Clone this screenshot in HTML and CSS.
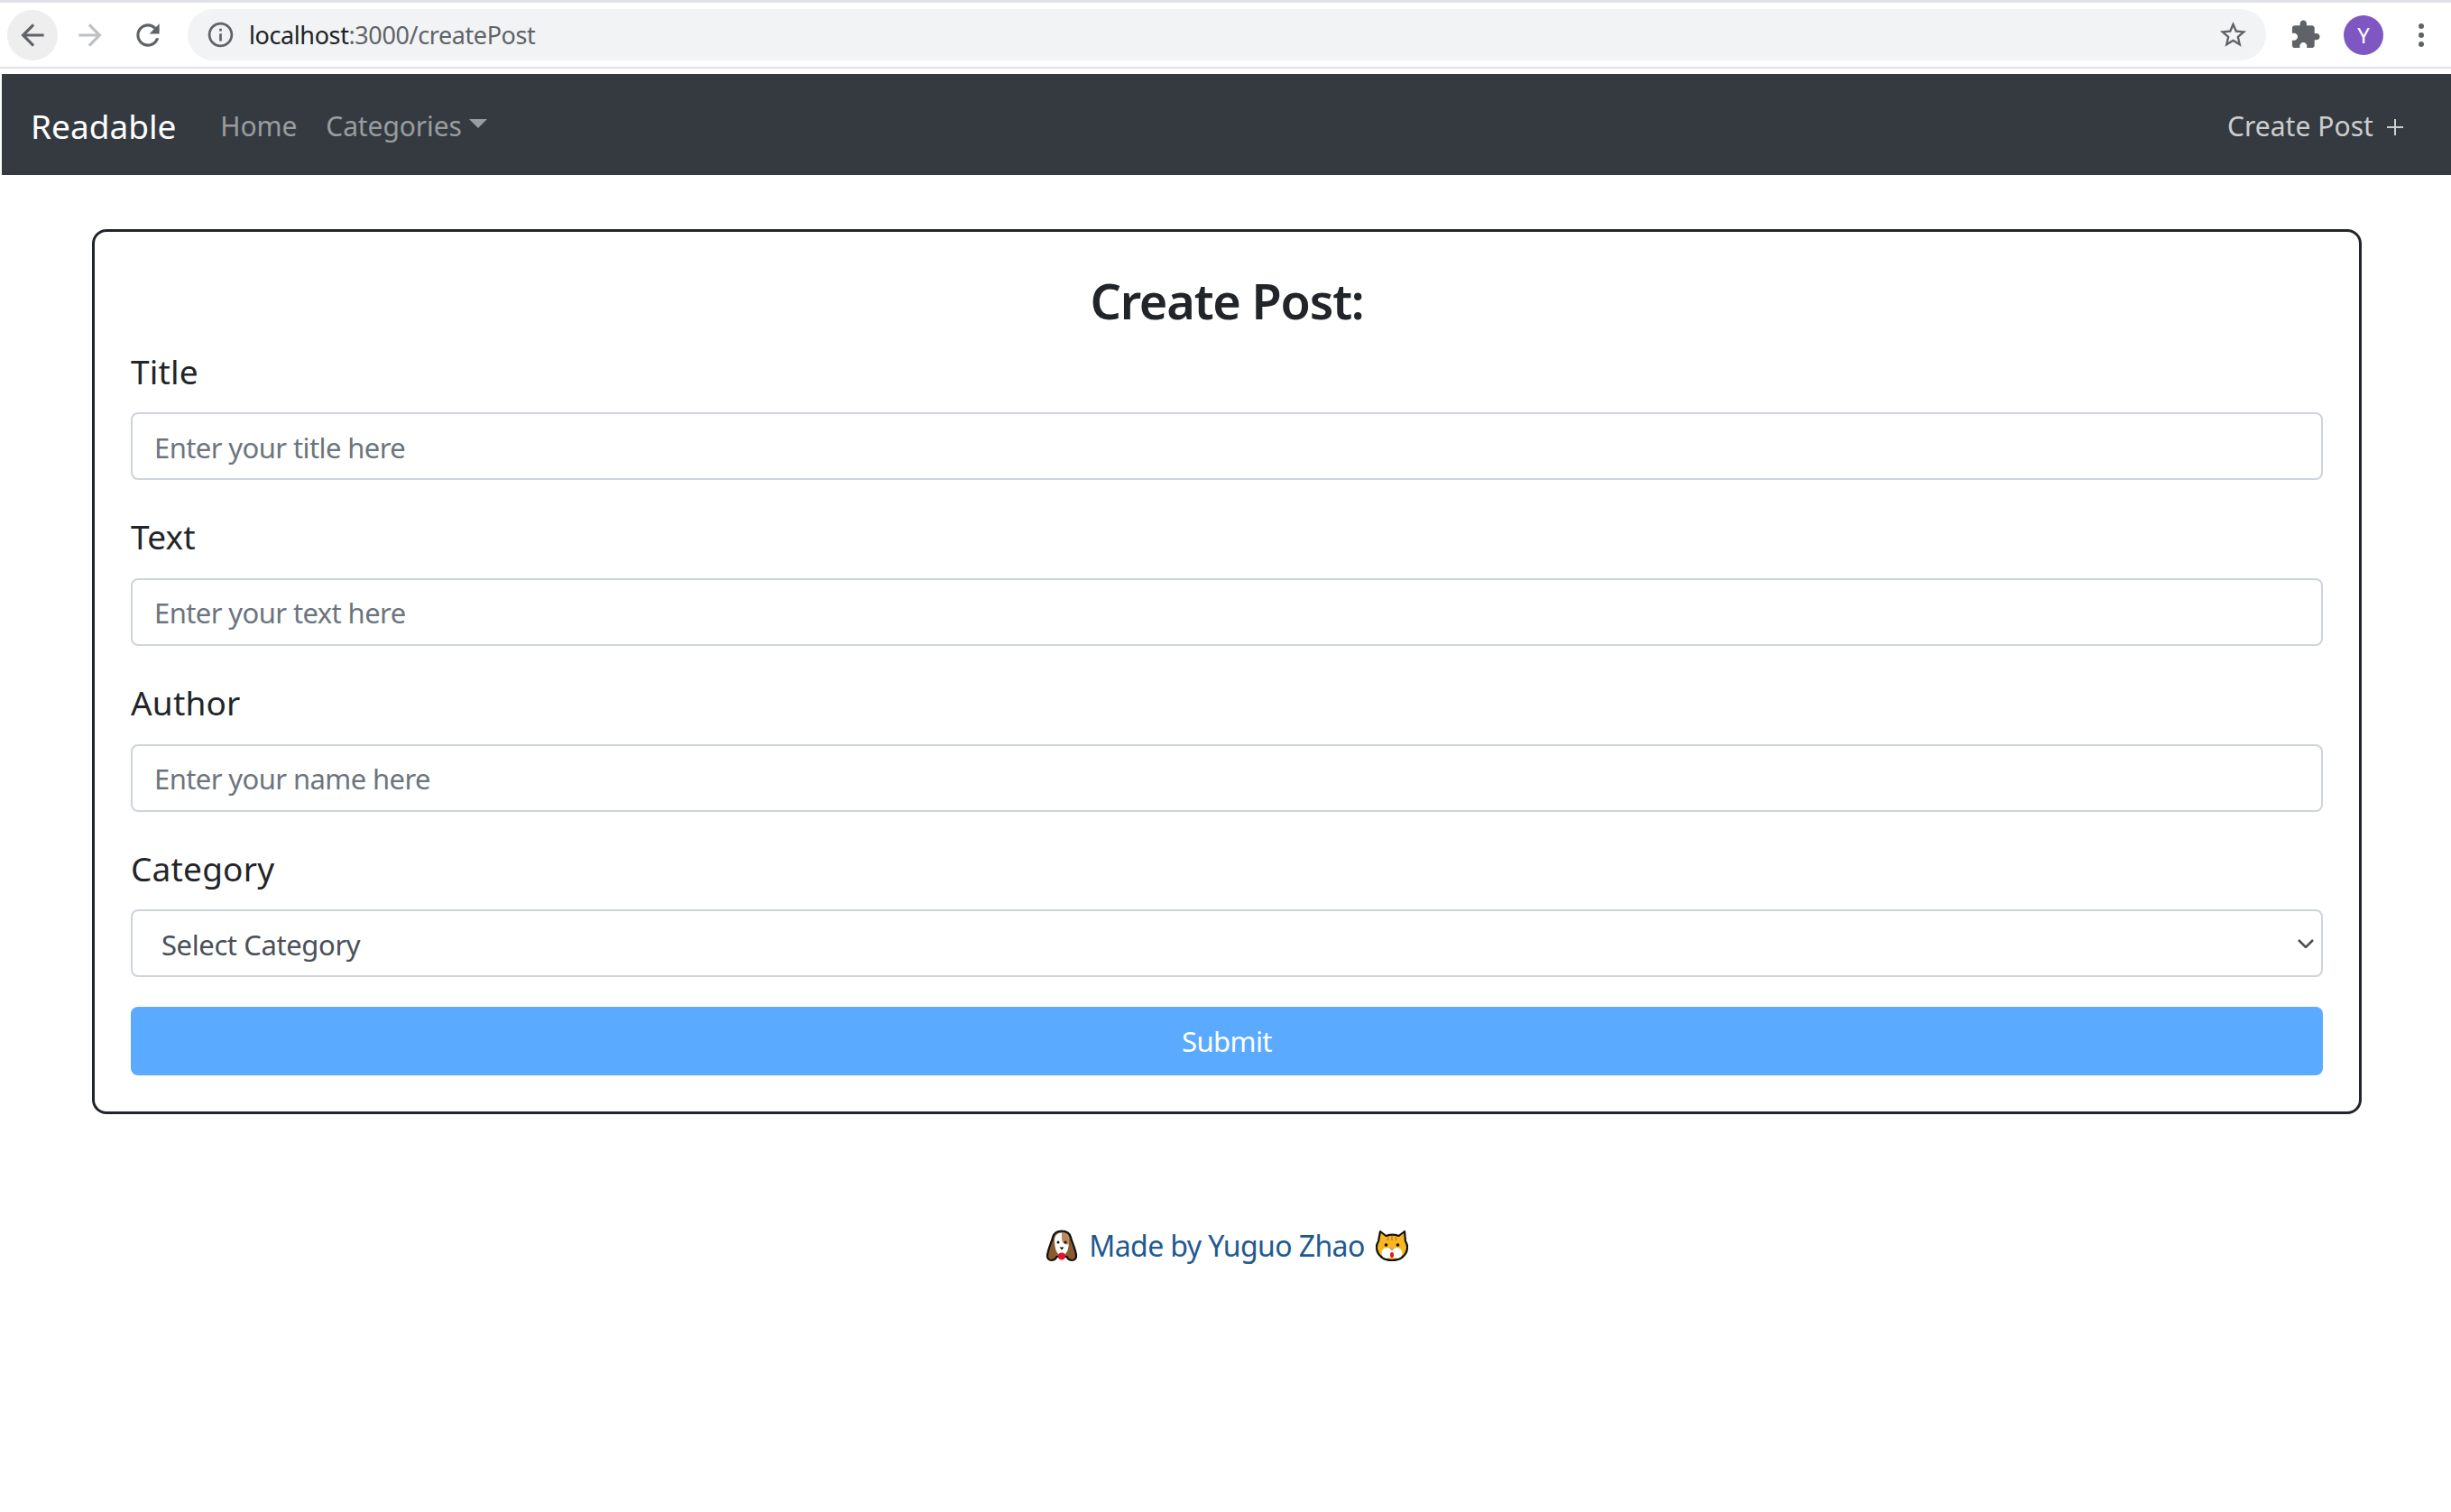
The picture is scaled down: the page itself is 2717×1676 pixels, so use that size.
FILE: index.html
```html
<!DOCTYPE html>
<html lang="en">
<head>
<meta charset="utf-8">
<title>Readable</title>
<link rel="stylesheet" href="styles.css">
</head>
<body>
<div class="chrome">
  <div class="circle-btn hover"><svg class="ic" viewBox="0 0 24 24"><path d="M20 11H7.83l5.59-5.59L12 4l-8 8 8 8 1.41-1.41L7.83 13H20v-2z"/></svg></div>
  <div class="circle-btn fwd"><svg class="ic faded" viewBox="0 0 24 24"><path d="M4 11h12.170l-5.590-5.590L12 4l8 8-8 8-1.410-1.410L16.170 13H4v-2z"/></svg></div>
  <div class="circle-btn reload"><svg class="ic" viewBox="0 0 24 24"><path d="M17.65 6.35C16.2 4.9 14.21 4 12 4c-4.42 0-7.99 3.58-7.99 8s3.57 8 7.99 8c3.73 0 6.84-2.55 7.73-6h-2.08c-.82 2.33-3.04 4-5.65 4-3.31 0-6-2.69-6-6s2.69-6 6-6c1.66 0 3.14.69 4.22 1.78L13 11h7V4l-2.35 2.35z"/></svg></div>
  <div class="omnibox">
    <svg class="ic info" viewBox="0 0 24 24"><path d="M11 7h2v2h-2zm0 4h2v6h-2zm1-9C6.48 2 2 6.48 2 12s4.48 10 10 10 10-4.48 10-10S17.52 2 12 2zm0 18c-4.41 0-8-3.59-8-8s3.59-8 8-8 8 3.59 8 8-3.59 8-8 8z"/></svg>
    <span class="url"><span class="host">localhost</span>:3000/createPost</span>
    <svg class="ic star" viewBox="0 0 24 24"><path d="M22 9.24l-7.19-.62L12 2 9.19 8.63 2 9.24l5.46 4.73L5.82 21 12 17.27 18.18 21l-1.63-7.03L22 9.24zM12 15.4l-3.76 2.27 1-4.28-3.32-2.88 4.38-.38L12 6.1l1.71 4.04 4.38.38-3.32 2.88 1 4.28L12 15.4z"/></svg>
  </div>
  <svg class="ic puzzle" viewBox="0 0 24 24"><path d="M20.5 11H19V7c0-1.1-.9-2-2-2h-4V3.5C13 2.12 11.88 1 10.5 1S8 2.12 8 3.5V5H4c-1.1 0-1.99.9-1.99 2v3.8H3.5c1.49 0 2.7 1.21 2.7 2.7s-1.21 2.7-2.7 2.7H2V20c0 1.1.9 2 2 2h3.8v-1.5c0-1.49 1.21-2.7 2.7-2.7 1.49 0 2.7 1.21 2.7 2.7V22H17c1.1 0 2-.9 2-2v-4h1.5c1.38 0 2.5-1.12 2.5-2.5S21.88 11 20.5 11z"/></svg>
  <div class="avatar">Y</div>
  <div class="dots"><i></i><i></i><i></i></div>
</div>

<nav class="navbar">
  <a class="brand">Readable</a>
  <a class="nav-link home">Home</a>
  <a class="nav-link cats">Categories<span class="caret"></span></a>
  <a class="create">Create Post<svg class="plus" viewBox="0 0 20 20"><path d="M10 1v18M1 10h18"/></svg></a>
</nav>

<main class="page">
  <form class="card">
    <h2 class="heading">Create Post:</h2>
    <div class="group">
      <label class="label" for="t">Title</label>
      <input class="field" id="t" placeholder="Enter your title here">
    </div>
    <div class="group">
      <label class="label" for="x">Text</label>
      <input class="field" id="x" placeholder="Enter your text here">
    </div>
    <div class="group">
      <label class="label" for="a">Author</label>
      <input class="field" id="a" placeholder="Enter your name here">
    </div>
    <div class="group">
      <label class="label" for="c">Category</label>
      <div class="select-wrap">
        <select class="field select" id="c"><option>Select Category</option></select>
        <svg class="chevron" viewBox="0 0 18 10"><path d="M1 1l8 8 8-8"/></svg>
      </div>
    </div>
    <button class="submit" type="button">Submit</button>
  </form>

  <footer class="footer">
    <svg class="emoji" viewBox="0 0 36 36">
      <path d="M18 1.500c-6 0-9 3-10 7-1 5-5 12-6 20-.4 3 1.500 5.500 4.500 5.500 3 0 5-2 6-4h11c1 2 3 4 6 4s4.900-2.500 4.500-5.500c-1-8-5-15-6-20-1-4-4-7-10-7z" fill="#8a5a2e" stroke="#111" stroke-width="2.200"/>
      <path d="M18 3.500c-5 0-8 3-8 8 0 6 1 17 8 17s8-11 8-17c0-5-3-8-8-8z" fill="#fff"/>
      <path d="M18 3.500c4.500 0 8 3 8 8 0 2-.1 3-.4 5-4 .5-7.600-2-7.600-6z" fill="#b98a5e"/>
      <circle cx="14" cy="14" r="1.500" fill="#111"/><circle cx="22" cy="14" r="1.500" fill="#111"/>
      <path d="M15.500 19.500h5L18 22.500z" fill="#111"/>
      <circle cx="18" cy="29.500" r="4" fill="#e8112d"/>
    </svg>
    <a class="credit">Made by Yuguo Zhao</a>
    <svg class="emoji" viewBox="0 0 36 36">
      <path d="M5 2l6.500 5c4-1.500 10-1.500 14 0L32 2l1 11c2 3 2.500 5 2 8-1 8-8 13-17 13S2 29 1 21c-.5-3 0-5 2-8z" fill="#f8b71c" stroke="#111" stroke-width="2.200" stroke-linejoin="round"/>
      <path d="M18 7v5M13.500 8v4M22.500 8v4" stroke="#d9821e" stroke-width="1.800"/>
      <circle cx="11.500" cy="17" r="1.800" fill="#111"/><circle cx="24.500" cy="17" r="1.800" fill="#111"/>
      <ellipse cx="12.500" cy="26" rx="6" ry="6" fill="#fff"/><ellipse cx="23.500" cy="26" rx="6" ry="6" fill="#fff"/>
      <path d="M15 20h6l-3 3z" fill="#ec8f5c"/>
      <ellipse cx="18" cy="28" rx="2" ry="3" fill="#e8112d"/>
    </svg>
  </footer>
</main>
</body>
</html>
```
FILE: styles.css
```css
* { box-sizing: border-box; }
html, body { margin: 0; background: #fff; }
body { font-family: "Noto Sans", "Open Sans", sans-serif; color: #212529; }

.chrome {
  height: 76px;
  border-top: 3px solid #dee1e6;
  border-bottom: 2px solid #dee1e6;
  display: flex;
  align-items: center;
  padding: 0 0 0 8px;
}
.circle-btn { width: 56px; height: 56px; border-radius: 50%; display: flex; align-items: center; justify-content: center; flex: none; }
.circle-btn.hover { background: #eeeeee; }
.circle-btn.fwd { margin-left: 8px; }
.circle-btn.reload { margin-left: 8px; }
.ic { width: 38px; height: 38px; fill: #5f6368; flex: none; display: block; }
.ic.faded { fill: #bdc0c4; }
.omnibox {
  margin-left: 16px;
  width: 2304px;
  height: 57px;
  border-radius: 29px;
  background: #f1f3f4;
  display: flex;
  align-items: center;
  padding: 0 19px 0 20px;
}
.info { width: 33px; height: 33px; }
.url { margin-left: 15px; font-size: 27px; letter-spacing: -0.4px; color: #5f6368; flex: 1; }
.host { color: #202124; }
.star { width: 35px; height: 35px; }
.puzzle { width: 35px; height: 35px; margin-left: 26px; }
.avatar {
  width: 44px; height: 44px; border-radius: 50%; background: #7e57c2; color: #fff;
  font-size: 24px; display: flex; align-items: center; justify-content: center; margin-left: 25px; flex: none;
}
.dots { display: flex; flex-direction: column; gap: 4px; margin-left: 39px; flex: none; }
.dots i { width: 6px; height: 6px; border-radius: 50%; background: #5f6368; display: block; }

.navbar {
  margin-top: 6px;
  margin-left: 2px;
  height: 112px;
  background: #343a40;
  display: flex;
  align-items: center;
  padding: 2px 52px 0 32px;
  font-size: 30px;
}
.brand { color: #fff; font-size: 37px; letter-spacing: 0; }
.nav-link { color: rgba(255,255,255,.5); letter-spacing: -0.1px; }
.home { margin-left: 49px; }
.cats { margin-left: 32px; display: flex; align-items: center; }
.caret {
  margin-left: 8px; margin-top: -4px; width: 0; height: 0;
  border-left: 10px solid transparent; border-right: 10px solid transparent; border-top: 10px solid rgba(255,255,255,.5);
}
.create { margin-left: auto; color: rgba(255,255,255,.75); letter-spacing: 0.05px; display: flex; align-items: center; }
.plus { width: 20px; height: 20px; margin-left: 14px; margin-top: 4px; stroke: rgba(255,255,255,.75); stroke-width: 2; fill: none; }

.page { padding: 60px 0 0 102px; }
.card {
  width: 2516px;
  height: 981px;
  border: 3px solid #212529;
  border-radius: 16px;
  padding: 40px 40px;
  display: flex;
  flex-direction: column;
}
.heading { margin: 0; text-align: center; font-size: 54px; font-weight: 600; letter-spacing: -1.2px; line-height: 72px; height: 68px; }
.group { height: 184px; display: flex; flex-direction: column; }
.label { font-size: 37px; letter-spacing: 0.2px; line-height: 50px; height: 92px; padding-top: 1px; display: flex; align-items: center; }
.field {
  width: 100%; height: 75px; border: 2px solid #ced4da; border-radius: 8px; background: #fff;
  font-family: inherit; font-size: 31px; letter-spacing: -0.6px; color: #495057; padding: 2px 24px 0; outline: none; flex: none;
}
.field::placeholder { color: #6c757d; opacity: 1; }
.select-wrap { position: relative; }
.select { appearance: none; -webkit-appearance: none; padding-left: 32px; letter-spacing: -0.4px; }
.chevron { position: absolute; right: 10px; top: 33px; width: 18px; height: 10px; fill: none; stroke: #495057; stroke-width: 2.500; }
.submit {
  width: 100%; height: 76px; margin-top: 16px; border: 0; border-radius: 8px; background: #5aaaff; color: #fff;
  font-family: inherit; font-size: 31px; letter-spacing: -0.6px; flex: none;
}
.footer { width: 2516px; margin-top: 124px; display: flex; align-items: center; justify-content: center; gap: 12px; font-size: 32px; letter-spacing: -0.6px; }
.credit { color: #1f5a8f; }
.emoji { width: 36px; height: 36px; flex: none; }
```
